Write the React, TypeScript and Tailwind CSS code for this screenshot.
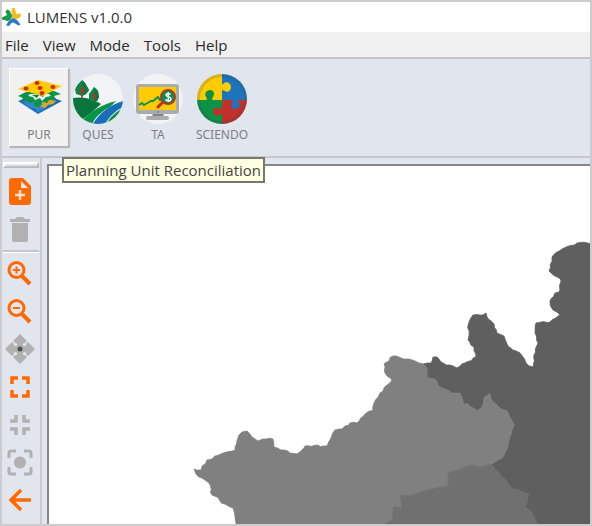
import type { ReactNode } from "react";

type Point = [number, number];

const ORANGE = "#ff6a00";
const GREY = "#b1b1b1";

const westCoast: Point[] = [
  [236, 526], [235, 516], [233, 508], [225, 504], [212, 495], [209, 483], [202, 478], [196, 474], [194, 469],
  [201, 470], [207, 460], [221, 454], [235, 450], [237, 441], [239, 435], [242, 432], [247, 431], [252, 437],
  [258, 441], [263, 439], [273, 439], [274, 447], [281, 450], [297, 454], [301, 451], [305, 446], [327, 446],
  [331, 438], [335, 430], [342, 429], [350, 423], [357, 423], [365, 414], [373, 410], [374, 403], [380, 393],
  [392, 380], [385, 373], [384, 364], [393, 356], [401, 358], [415, 361], [423, 364],
];

const eastCoast: Point[] = [
  [423, 364], [431, 363], [433, 357], [437, 357], [441, 362], [450, 365], [457, 368], [465, 363], [476, 357],
  [474, 347], [468, 340], [469, 322], [473, 315], [483, 315], [486, 313], [487, 317], [494, 324], [497, 333],
  [504, 336], [508, 346], [513, 350], [520, 353], [526, 363], [533, 367], [534, 355], [538, 343], [535, 333],
  [536, 323], [550, 322], [560, 315], [553, 310], [550, 301], [555, 293], [559, 292], [561, 280], [549, 271],
  [552, 257], [562, 249], [577, 243], [592, 243],
];

const innerBorder: Point[] = [
  [423, 364], [427, 368], [427, 378], [435, 379], [440, 387], [452, 393], [460, 393], [464, 405], [467, 403],
  [477, 411], [482, 407], [484, 398], [490, 394], [492, 401], [501, 409], [507, 411], [514, 425], [509, 440],
  [507, 449], [502, 458], [491, 464],
];

const southUnit: Point[] = [
  [491, 464], [483, 467], [470, 465], [458, 470], [448, 473], [448, 486], [430, 489], [413, 495], [400, 496],
  [402, 508], [393, 507], [393, 519], [385, 524], [380, 526],
];

const southEast: Point[] = [[491, 464], [512, 488], [529, 494], [525, 507], [532, 512], [538, 526]];

/** Splits long segments and nudges the new points, for a rough digitised edge. */
function roughen(points: Point[], amount: number): Point[] {
  const out: Point[] = [];
  let seed = 7;
  const next = () => {
    seed = (seed * 1103515245 + 12345) % 2147483648;
    return seed / 2147483648 - 0.5;
  };
  points.forEach(([x, y], i) => {
    out.push([x, y]);
    const following = points[i + 1];
    if (!following) return;
    const [nx, ny] = following;
    const steps = Math.floor(Math.hypot(nx - x, ny - y) / 3);
    for (let s = 1; s < steps; s++) {
      const t = s / steps;
      out.push([x + (nx - x) * t + next() * amount, y + (ny - y) * t + next() * amount]);
    }
  });
  return out;
}

function outline(...parts: Point[][]): string {
  return `M${parts.flat().map(([x, y]) => `${x.toFixed(1)} ${y.toFixed(1)}`).join(" L")} Z`;
}

function MapCanvas() {
  const west = roughen(westCoast, 2);
  const east = roughen(eastCoast, 2);
  const inner = roughen(innerBorder, 1);
  const south = roughen(southUnit, 1);
  const divide = roughen(southEast, 1);
  const corner: Point[] = [[592, 526]];
  return (
    <svg
      className="block h-full w-full"
      viewBox="49 166 541 358"
      preserveAspectRatio="xMaxYMax slice"
      role="img"
      aria-label="Map of planning units"
    >
      <path d={outline(east, corner, [...divide].reverse(), [...inner].reverse())} fill="#5f5f5f" stroke="#5f5f5f" strokeWidth=".8" />
      <path d={outline(west, inner, south)} fill="#808080" stroke="#808080" strokeWidth=".8" />
      <path d={outline(south, [...divide].reverse())} fill="#707070" stroke="#707070" strokeWidth=".8" />
    </svg>
  );
}

function LogoIcon() {
  return (
    <svg className="block" width="20" height="20" viewBox="0 0 20 20" aria-hidden="true">
      <path d="M10.500 9 9.500 4l1-3h2l1 2.500.5 3.500 4-.5 1 1.500-1 2.500-5 2-3-.5Z" fill="#f9b814" />
      <path d="M0 10.500 5 8 3.500 4.500 5 2.500l2.500 1L10.500 9l-2 3.500-3 1.500L0 12.500Z" fill="#169b4b" />
      <path d="M4 18.500 7 13.500l4-2.500 4 2 3.500 4.500-2 1-5-3-2 .5L7 19Z" fill="#2a78c6" />
    </svg>
  );
}

function PurIcon() {
  return (
    <svg className="block" width="50" height="50" viewBox="0 0 50 50" aria-hidden="true">
      <path d="M4 27 26 19 48 27 24 40Z" fill="#1b6fb9" />
      <path d="m9 28 9-3 5 3 8-3 4 3-7 4 3 3-7 3-4-4-5 1Z" fill="#3f92d2" opacity=".6" />
      <path d="m28 29 6-4 4 1 4 1-3 3-5 1-3 3-5-1 2-2Z" fill="#d7a72c" />
      <path d="M4 22 12 18 40 17l7 3-7 2 2 3-7 1-2 3-5-2-3 6-5-1 1-4-6 1-2-3-6 1 2-3Z" fill="#0b9444" />
      <path d="m14 22 5 1 2 3 5-2 2 3 4-4 5-1-2-2H16Z" fill="#f0f4f1" />
      <path d="m18 21 5 3 2-3 4 2 2-3Z" fill="#137e3c" />
      <path d="M4 15 24 6 48 12 29 22Z" fill="#ffcb05" />
      <g fill="#d4271e">
        <ellipse cx="23" cy="9" rx="2.500" ry="2" />
        <ellipse cx="12" cy="14.500" rx="2.500" ry="2" />
        <ellipse cx="26" cy="14" rx="2.500" ry="2" />
        <ellipse cx="39" cy="13" rx="2.500" ry="2" />
        <ellipse cx="28" cy="19" rx="2.500" ry="2" />
      </g>
    </svg>
  );
}

function QuesIcon() {
  return (
    <svg className="block" width="50" height="50" viewBox="0 0 50 50" aria-hidden="true">
      <defs>
        <clipPath id="ques-disc"><circle cx="25" cy="25" r="25" /></clipPath>
      </defs>
      <circle cx="25" cy="25" r="25" fill="#f2f3f4" />
      <g clipPath="url(#ques-disc)">
        <path d="M0 24C12 22 22 26 28 30 22 36 15 41 9 46L0 44Z" fill="#08753a" />
        <path d="M10 46C18 37 30 30 43 27L37 33C29 37 22 43 18 52Z" fill="#079447" />
        <path d="M19 51C26 40 36 31 50 27V33C42 37 36 43 31 52Z" fill="#1a6fba" />
        <path d="M34 49C38 42 43 38 50 34V41L38 51Z" fill="#079447" />
        <path d="m9 6 3 3 4 7-3 4-4 2-6-2-1-5 2-4Z" fill="#08894a" />
        <path d="m9 6 3 3 4 7-3 4-4 2Z" fill="#087a43" />
        <path d="m21 13 4 4 1 6-2 4-4 1-4-3v-5l3-4Z" fill="#08894a" />
        <path d="m21 13 4 4 1 6-2 4-3 1Z" fill="#087a43" />
        <path d="M9 11v13M9 18l-3-3M9 19l3-4M21 18v9M21 23l-2-2M21 24l2-3" stroke="#a93a2b" strokeWidth="1.500" fill="none" />
      </g>
    </svg>
  );
}

function TaIcon() {
  return (
    <svg className="block" width="50" height="50" viewBox="0 0 50 50" aria-hidden="true">
      <circle cx="25" cy="25" r="25" fill="#f2f3f4" />
      <path d="M20 39h10l1 4H19Z" fill="#858585" />
      <rect x="13" y="42" width="23" height="4" rx="2" fill="#adadad" />
      <rect x="3" y="10" width="43" height="30" rx="3" fill="#a9abad" />
      <rect x="6" y="13" width="37" height="23" fill="#ffcb05" />
      <circle cx="25" cy="38" r="1" fill="#4f91cf" />
      <path d="m6 31 3-2 2 2 7-4 2 0 5-4 2 3 4-1" fill="none" stroke="#159447" strokeWidth="2" />
      <path d="m25 33 6-6" stroke="#c6281f" strokeWidth="3" strokeLinecap="round" />
      <circle cx="35" cy="23" r="7" fill="#0b9050" stroke="#a53a2e" strokeWidth="2" />
      <path d="M37.500 20.500C36 19 33 19 33 21s5 1.500 5 4-4 2.500-5.500.5M35.300 18v10" fill="none" stroke="#fff" strokeWidth="1.400" />
    </svg>
  );
}

function SciendoIcon() {
  return (
    <svg className="block" width="50" height="50" viewBox="0 0 50 50" aria-hidden="true">
      <defs>
        <clipPath id="sciendo-disc"><circle cx="25" cy="25" r="25" /></clipPath>
      </defs>
      <g clipPath="url(#sciendo-disc)">
        <path d="M0 0h25v26H0Z" fill="#ffcb05" />
        <path d="M25 0h25v26H25Z" fill="#1c75bc" />
        <path d="M0 26h25v24H0Z" fill="#0a9347" />
        <path d="M25 26h25v24H25Z" fill="#c1302a" />
        <path d="M24 10c2 1 2 0 3-1 2-2 7 0 7 4s-4 6-6 4c-2-1-2-1-4 0Z" fill="#ffcb05" />
        <path d="M9 27c1-2 1-3 0-4-2-3 0-7 4-7s5 4 3 7c-1 1-1 2 0 4Z" fill="#0a9347" />
        <path d="M35 25c1 2 1 2 0 4-2 3 0 6 3 6 4 0 6-4 4-6-1-2-1-2 0-4Z" fill="#1c75bc" />
        <path d="M26 34c-2 1-3 1-4 0-3-1-6 0-6 4 0 3 3 5 6 3 1-1 2-1 4 0Z" fill="#c1302a" />
      </g>
      <circle cx="25" cy="25" r="23.500" fill="none" stroke="#444" strokeOpacity=".2" strokeWidth="3" />
    </svg>
  );
}

function ModuleButton({ label, width, active, children }: { label: string; width: string; active?: boolean; children: ReactNode }) {
  const look = active
    ? "border-t-white border-l-white border-r-[#b4b4b4] border-b-[#b4b4b4] bg-[#f1f1f2] shadow-[1px_1px_1px_#b9b9bc]"
    : "border-transparent";
  return (
    <button
      type="button"
      className={`flex h-[79px] flex-col items-center border pt-[5px] font-['Noto_Sans',sans-serif] text-xs leading-[22px] text-[#7e7e82] ${width} ${look}`}
    >
      {children}
      {label}
    </button>
  );
}

function ToolButton({ label, children }: { label: string; children: ReactNode }) {
  return (
    <button type="button" aria-label={label} className="block h-[38px] w-9 shrink-0">
      <svg className="block" width="36" height="38" viewBox="0 0 36 38" aria-hidden="true">
        {children}
      </svg>
    </button>
  );
}

function SideTools() {
  return (
    <nav aria-label="Map tools" className="flex w-[38px] shrink-0 flex-col overflow-hidden">
      <div className="mx-px mt-1 mb-[5px] h-[6px] shrink-0 border-2 border-t-white border-l-white border-r-[#bbb] border-b-[#bbb]" />
      <ToolButton label="Add data">
        <path d="M10 5h11l8 8v16a3 3 0 0 1-3 3H10a3 3 0 0 1-3-3V8a3 3 0 0 1 3-3Z" fill={ORANGE} />
        <path d="M19 8v7h7Z" fill="#e6e9f0" />
        <path d="M18 17v10M13 22h10" stroke="#ffe3cf" strokeWidth="2.500" />
      </ToolButton>
      <ToolButton label="Delete">
        <path d="M10 12h16v17a2 2 0 0 1-2 2H12a2 2 0 0 1-2-2ZM8 8h5l2-2h6l2 2h5v3H8Z" fill={GREY} />
      </ToolButton>
      <div className="mx-px my-px h-[3px] shrink-0 border-t-2 border-b border-t-[#c6c6ca] border-b-white" />
      <ToolButton label="Zoom in">
        <g fill="none" stroke={ORANGE}>
          <circle cx="14.500" cy="16" r="7.500" strokeWidth="3" />
          <path d="m20 22 8 8" strokeWidth="4" />
          <path d="M14.500 12.500v7M11 16h7" strokeWidth="2" />
        </g>
      </ToolButton>
      <ToolButton label="Zoom out">
        <g fill="none" stroke={ORANGE}>
          <circle cx="14.500" cy="16" r="7.500" strokeWidth="3" />
          <path d="m20 22 8 8" strokeWidth="4" />
          <path d="M11 16h7" strokeWidth="2" />
        </g>
      </ToolButton>
      <ToolButton label="Pan">
        <path
          d="m18 4 7 7-3 3h-8l-3-3ZM18 34l-7-7 3-3h8l3 3ZM3 19l7-7 3 3v8l-3 3ZM33 19l-7 7-3-3v-8l3-3Z"
          fill={GREY}
        />
        <path d="M14 12h8v14h-8ZM11 15h14v8H11Z" fill={GREY} />
        <g fill="#e2e6ef">
          <circle cx="13.500" cy="14.500" r="1.600" />
          <circle cx="22.500" cy="14.500" r="1.600" />
          <circle cx="13.500" cy="23.500" r="1.600" />
          <circle cx="22.500" cy="23.500" r="1.600" />
        </g>
        <circle cx="18" cy="19" r="2.500" fill="#4e4e56" />
      </ToolButton>
      <ToolButton label="Zoom to full extent">
        <path d="M10 16v-6h6M20 10h6v6M26 22v6h-6M16 28h-6v-6" fill="none" stroke={ORANGE} strokeWidth="3.500" />
      </ToolButton>
      <ToolButton label="Zoom to selection">
        <path d="M8 15h6V9M22 9v6h6M28 23h-6v6M14 29v-6H8" fill="none" stroke={GREY} strokeWidth="3.500" />
      </ToolButton>
      <ToolButton label="Zoom to layer">
        <path
          d="M7 14V9q0-2 2-2h5M22 7h5q2 0 2 2v5M29 23v5q0 2-2 2h-5M14 30H9q-2 0-2-2v-5"
          fill="none"
          stroke={GREY}
          strokeWidth="3"
        />
        <circle cx="18" cy="18.500" r="6" fill={GREY} />
      </ToolButton>
      <ToolButton label="Previous extent">
        <path d="M19 8 9 18l10 10M9 18h20" fill="none" stroke={ORANGE} strokeWidth="3.500" />
      </ToolButton>
    </nav>
  );
}

export default function App() {
  return (
    <div className="flex h-screen flex-col overflow-hidden border-2 border-[#cdcbcc] bg-[#e1e5ee] font-['Open_Sans',sans-serif]">
      <header className="flex h-[30px] shrink-0 items-center gap-[5px] bg-white text-[15px] text-[#333]">
        <LogoIcon />
        <h1>LUMENS v1.0.0</h1>
      </header>
      <nav aria-label="Main menu" className="flex h-[25px] shrink-0 items-center gap-3.5 bg-[#f0f0f0] px-[3px] text-[15px] leading-5 text-[#2c2c2c]">
        {["File", "View", "Mode", "Tools", "Help"].map((item) => (
          <button key={item} type="button">{item}</button>
        ))}
      </nav>
      <section aria-label="Modules" className="relative z-10 h-[101px] shrink-0 border-t-2 border-b-2 border-t-[#c4c4c6] border-b-[#c6c8ce] pt-[9px] pl-[7px]">
        <div className="flex">
          <ModuleButton label="PUR" width="w-[60px]" active><PurIcon /></ModuleButton>
          <ModuleButton label="QUES" width="w-[58px]"><QuesIcon /></ModuleButton>
          <ModuleButton label="TA" width="w-[62px]"><TaIcon /></ModuleButton>
          <ModuleButton label="SCIENDO" width="w-[66px]"><SciendoIcon /></ModuleButton>
        </div>
        <div
          role="tooltip"
          className="absolute top-[98px] left-[60px] border-2 border-[#77776c] bg-[#ffffe1] px-0.5 text-[15px] leading-[22px] whitespace-nowrap text-[#444]"
        >
          Planning Unit Reconciliation
        </div>
      </section>
      <div className="flex min-h-0 flex-1">
        <SideTools />
        <main className="min-w-0 flex-1 border-l-2 border-[#c9cbd2] pt-[6px] pl-[5px]">
          <div className="h-full overflow-hidden border-t-2 border-l-2 border-[#85868b] bg-white">
            <MapCanvas />
          </div>
        </main>
      </div>
    </div>
  );
}
